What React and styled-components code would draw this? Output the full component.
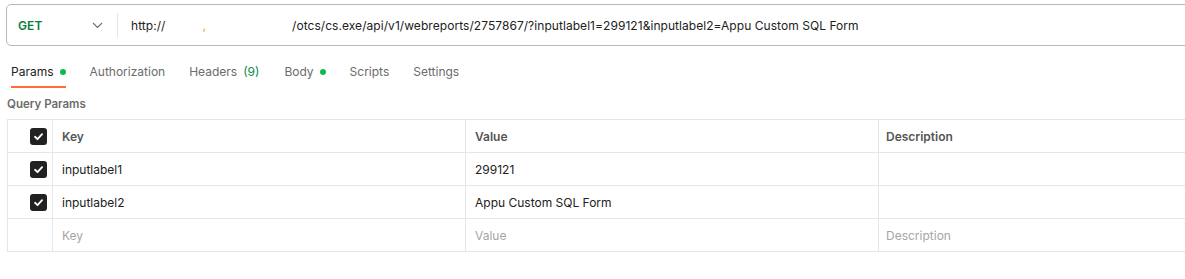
import React from "react";
import styled, { createGlobalStyle } from "styled-components";

const Global = createGlobalStyle`
  html, body { margin: 0; padding: 0; background: #ffffff; }
  body { font-family: Inter, "Noto Sans", "Liberation Sans", sans-serif; color: #212121; }
`;

const Page = styled.div`
  width: 1185px;
  height: 279px;
  overflow: hidden;
  padding: 4px 0 0 6px;
  box-sizing: border-box;
`;

const UrlBar = styled.div`
  display: flex;
  align-items: center;
  width: 1260px;
  height: 42px;
  box-sizing: border-box;
  border: 1px solid #b8b8b8;
  border-radius: 5px;
`;

const MethodBox = styled.div`
  display: flex;
  align-items: center;
  justify-content: space-between;
  width: 110px;
  box-sizing: border-box;
  padding: 0 14px 0 11px;
`;

const Method = styled.span`
  font-size: 12px;
  font-weight: 600;
  color: #0b7d3e;
  letter-spacing: 0.1px;
`;

const Divider = styled.div`
  width: 1px;
  height: 24px;
  background: #e3e3e3;
`;

const UrlText = styled.div`
  margin-left: 13px;
  font-size: 12px;
  letter-spacing: 0.055px;
  color: #212121;
  white-space: nowrap;
  display: flex;
  align-items: center;
`;

const Blank = styled.span`
  display: inline-block;
  width: ${(p) => p.$w}px;
`;

const Fragment = styled.span`
  color: #e89a3c;
`;

const Tabs = styled.div`
  display: flex;
  gap: 24px;
  margin-top: 11px;
  padding-left: 5px;
`;

const Tab = styled.div`
  display: flex;
  align-items: center;
  gap: 6px;
  height: 29px;
  font-size: 12px;
  color: ${(p) => (p.$active ? "#212121" : "#6b6b6b")};
  border-bottom: 2px solid ${(p) => (p.$active ? "#ff6c37" : "transparent")};
`;

const Count = styled.span`
  margin-left: 6px;
  padding-right: 1px;
  color: #0a8a46;
`;

const Dot = styled.span`
  width: 6px;
  height: 6px;
  border-radius: 50%;
  background: #0cbb52;
`;

const SectionLabel = styled.div`
  margin-top: 8px;
  margin-left: 1px;
  font-size: 11.5px;
  line-height: 16px;
  font-weight: 600;
  color: #6b6b6b;
`;

const Table = styled.div`
  margin-top: 7px;
  margin-left: 1px;
  display: grid;
  grid-template-columns: 45px 413px 413px 413px;
  grid-auto-rows: 33px;
  border-top: 1px solid #e6e6e6;
  border-left: 1px solid #e6e6e6;
  width: max-content;
`;

const Cell = styled.div`
  display: flex;
  align-items: center;
  box-sizing: border-box;
  padding-left: ${(p) => (p.$last ? 7 : 9)}px;
  border-right: 1px solid #e6e6e6;
  border-bottom: 1px solid #e6e6e6;
  font-size: 12px;
  font-weight: ${(p) => (p.$head ? 600 : 400)};
  color: ${(p) => (p.$head ? "#555555" : p.$muted ? "#a6a6a6" : "#212121")};
  white-space: nowrap;
`;

const CheckCell = styled.div`
  display: flex;
  align-items: center;
  justify-content: flex-end;
  padding-right: 5px;
  box-sizing: border-box;
  border-right: 1px solid #e6e6e6;
  border-bottom: 1px solid #e6e6e6;
`;

const Box = styled.span`
  display: flex;
  align-items: center;
  justify-content: center;
  width: 17px;
  height: 17px;
  border-radius: 3px;
  background: #212121;
`;

const Check = () => (
  <Box>
    <svg width="11" height="11" viewBox="0 0 12 12" fill="none">
      <path d="M2.2 6.3 L4.9 8.9 L9.9 3.4" stroke="#ffffff" strokeWidth="2" strokeLinecap="round" strokeLinejoin="round" />
    </svg>
  </Box>
);

const Chevron = () => (
  <svg width="11" height="7" viewBox="0 0 11 7" fill="none">
    <path d="M1 1 L5.5 5.5 L10 1" stroke="#6b6b6b" strokeWidth="1.1" />
  </svg>
);

const rows = [
  { key: "inputlabel1", value: "299121" },
  { key: "inputlabel2", value: "Appu Custom SQL Form" },
];

export default function App() {
  return (
    <Page>
      <Global />
      <UrlBar>
        <MethodBox>
          <Method>GET</Method>
          <Chevron />
        </MethodBox>
        <Divider />
        <UrlText>
          <span>http://</span>
          <Blank $w={37} />
          <Fragment>,</Fragment>
          <Blank $w={86} />
          <span>/otcs/cs.exe/api/v1/webreports/2757867/?inputlabel1=299121&amp;inputlabel2=Appu Custom SQL Form</span>
        </UrlText>
      </UrlBar>
      <Tabs>
        <Tab $active>
          Params <Dot />
        </Tab>
        <Tab>Authorization</Tab>
        <Tab>
          <span>
            Headers<Count>(9)</Count>
          </span>
        </Tab>
        <Tab>
          Body <Dot />
        </Tab>
        <Tab>Scripts</Tab>
        <Tab>Settings</Tab>
      </Tabs>
      <SectionLabel>Query Params</SectionLabel>
      <Table>
        <CheckCell>
          <Check />
        </CheckCell>
        <Cell $head>Key</Cell>
        <Cell $head>Value</Cell>
        <Cell $head $last>Description</Cell>
        {rows.map((r) => (
          <React.Fragment key={r.key}>
            <CheckCell>
              <Check />
            </CheckCell>
            <Cell>{r.key}</Cell>
            <Cell>{r.value}</Cell>
            <Cell $last />
          </React.Fragment>
        ))}
        <CheckCell />
        <Cell $muted>Key</Cell>
        <Cell $muted>Value</Cell>
        <Cell $muted $last>Description</Cell>
      </Table>
    </Page>
  );
}
